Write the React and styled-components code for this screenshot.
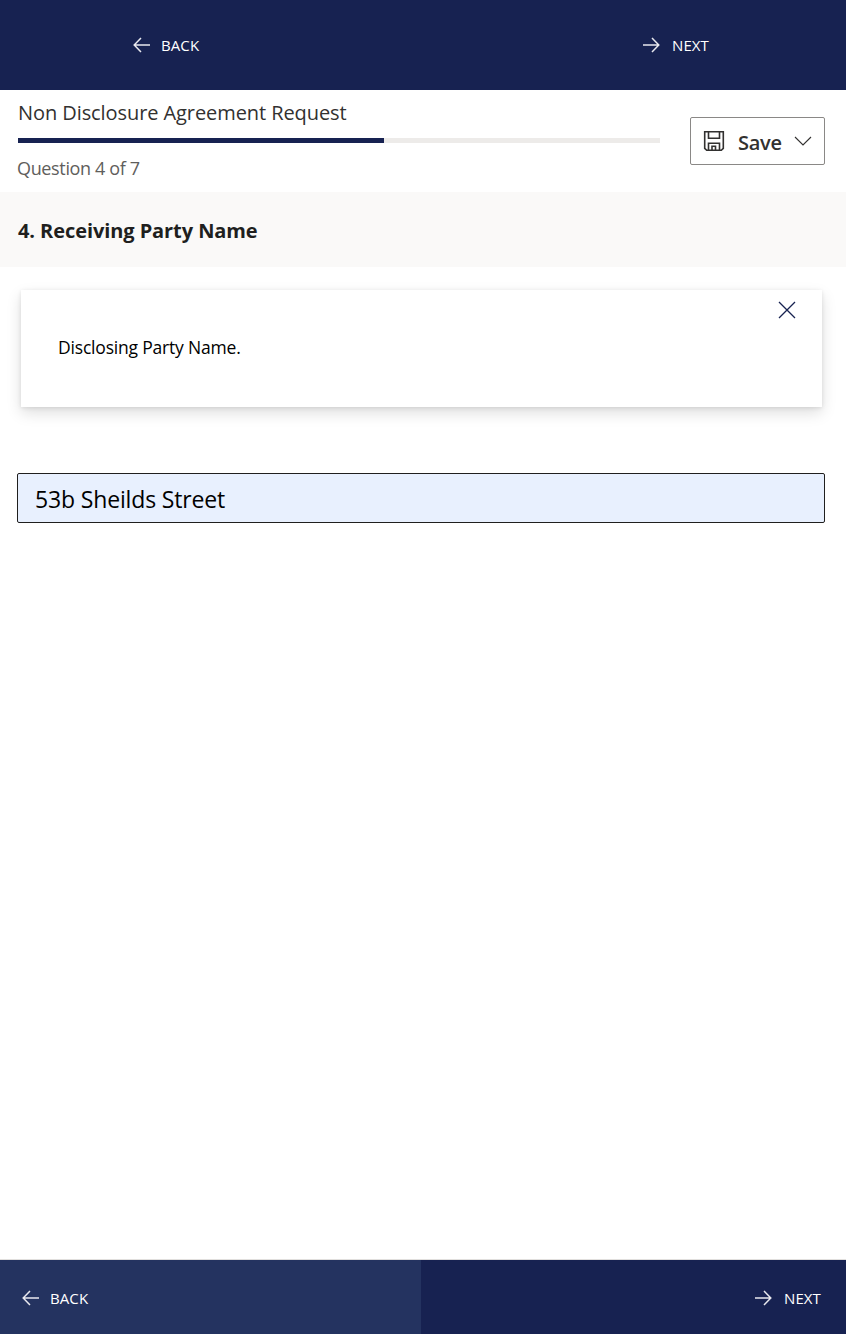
import React from "react";
import styled, { createGlobalStyle } from "styled-components";

const Global = createGlobalStyle`
  html, body { margin: 0; padding: 0; background: #fff; }
  body { font-family: "Open Sans", "Noto Sans", "Liberation Sans", sans-serif; }
`;

const Page = styled.div`
  width: 846px;
  height: 1334px;
  display: flex;
  flex-direction: column;
  overflow: hidden;
`;

const TopNav = styled.nav`
  height: 90px;
  background: #172251;
  display: flex;
  align-items: center;
  padding-left: 133px;
  flex: none;
`;

const TopItem = styled.div`
  flex: none;
  width: 509px;
  display: flex;
  align-items: center;
`;

const NavLabel = styled.span`
  color: #fff;
  font-size: 15px;
  letter-spacing: 0.1px;
  line-height: 20px;
  margin-left: ${(p) => (p.$next ? 12 : 10)}px;
`;

const NavIcon = ({ dir }) => (
  <svg width="18" height="16" viewBox="0 0 18 16" fill="none" stroke="#e8e8ee" strokeWidth="1.5">
    {dir === "back" ? (
      <path d="M17 8H1.2M8 1 1.2 8 8 15" />
    ) : (
      <path d="M1 8h15.8M10 1l6.8 7L10 15" />
    )}
  </svg>
);

const Header = styled.header`
  height: 102px;
  flex: none;
  display: flex;
  padding: 0 21px 0 18px;
`;

const HeaderMain = styled.div`
  width: 642px;
  display: flex;
  flex-direction: column;
`;

const Title = styled.h1`
  margin: 9px 0 0;
  font-size: 20px;
  font-weight: 400;
  letter-spacing: -0.08px;
  line-height: 28px;
  color: #323130;
`;

const Track = styled.div`
  height: 5px;
  margin-top: 11px;
  background: #edebe9;
`;

const Fill = styled.div`
  height: 100%;
  background: #172251;
`;

const Count = styled.div`
  margin-top: 13px;
  margin-left: -1px;
  font-size: 18px;
  letter-spacing: -0.35px;
  line-height: 24px;
  color: #605e5c;
`;

const SaveButton = styled.button`
  width: 135px;
  height: 48px;
  margin: 27px 0 0 30px;
  box-sizing: border-box;
  background: #fff;
  border: 1px solid #8a8886;
  border-radius: 2px;
  padding: 0 12px;
  display: flex;
  align-items: center;
  font-family: inherit;
  font-size: 20px;
  font-weight: 600;
  letter-spacing: -0.3px;
  color: #323130;
`;

const SaveText = styled.span`
  margin-left: 13px;
  margin-right: 12px;
  padding-top: 4px;
  line-height: 28px;
`;

const QuestionBand = styled.section`
  height: 75px;
  box-sizing: border-box;
  flex: none;
  background: #faf9f8;
  display: flex;
  align-items: center;
  padding: 2px 0 0 18px;
`;

const QuestionTitle = styled.h2`
  margin: 0;
  font-size: 20px;
  font-weight: 700;
  letter-spacing: -0.08px;
  color: #201f1e;
`;

const Body = styled.main`
  flex: 1;
  padding: 23px 21px 0 17px;
`;

const InfoCard = styled.div`
  position: relative;
  margin: 0 3px 0 4px;
  height: 117px;
  box-sizing: border-box;
  padding: 45px 37px 0;
  background: #fff;
  box-shadow: 0 6px 14px rgba(0, 0, 0, 0.13), 0 1px 4px rgba(0, 0, 0, 0.1);
  font-size: 17.5px;
  letter-spacing: -0.19px;
  line-height: 24px;
  color: #000;
`;

const CloseBtn = styled.svg`
  position: absolute;
  top: 11px;
  right: 26px;
`;

const Field = styled.div`
  margin-top: 66px;
  width: 808px;
  height: 50px;
  box-sizing: border-box;
  background: #e8f0fe;
  border: 1px solid #201f1e;
  border-radius: 2px;
  padding: 2px 0 0 17px;
  display: flex;
  align-items: center;
  font-size: 23px;
  letter-spacing: -0.15px;
  color: #000;
`;

const BottomNav = styled.nav`
  height: 75px;
  flex: none;
  border-top: 1px solid #e1dfdd;
  box-sizing: border-box;
  display: flex;
`;

const BottomCell = styled.div`
  flex: none;
  width: ${(p) => p.$w}px;
  background: ${(p) => p.$bg};
  display: flex;
  align-items: center;
  justify-content: ${(p) => (p.$end ? "flex-end" : "flex-start")};
  padding: ${(p) => (p.$end ? "2px 25px 0 0" : "2px 0 0 22px")};
  box-sizing: border-box;
`;

export default function App() {
  return (
    <Page>
      <Global />
      <TopNav>
        <TopItem>
          <NavIcon dir="back" />
          <NavLabel>BACK</NavLabel>
        </TopItem>
        <TopItem>
          <NavIcon dir="next" />
          <NavLabel $next>NEXT</NavLabel>
        </TopItem>
      </TopNav>
      <Header>
        <HeaderMain>
          <Title>Non Disclosure Agreement Request</Title>
          <Track>
            <Fill style={{ width: "57%" }} />
          </Track>
          <Count>Question 4 of 7</Count>
        </HeaderMain>
        <SaveButton>
          <svg width="22" height="22" viewBox="0 0 22 22" fill="none" stroke="#323130" strokeWidth="1.6">
            <path d="M1.7 1.7h18.6v16.6l-2 2H3.7l-2-2z" />
            <path d="M5.5 1.7v6.5h11V1.7M5.5 20.3v-7h11v7M9 20.3v-4h3.5v4" />
          </svg>
          <SaveText>Save</SaveText>
          <svg width="18" height="10" viewBox="0 0 18 10" fill="none" stroke="#323130" strokeWidth="1.1">
            <path d="M1 1l8 8 8-8" />
          </svg>
        </SaveButton>
      </Header>
      <QuestionBand>
        <QuestionTitle>4. Receiving Party Name</QuestionTitle>
      </QuestionBand>
      <Body>
        <InfoCard>
          Disclosing Party Name.
          <CloseBtn width="18" height="18" viewBox="0 0 18 18" fill="none" stroke="#172251" strokeWidth="1.3">
            <path d="M1 1l16 16M17 1 1 17" />
          </CloseBtn>
        </InfoCard>
        <Field>53b Sheilds Street</Field>
      </Body>
      <BottomNav>
        <BottomCell $w={421} $bg="#243360">
          <NavIcon dir="back" />
          <NavLabel>BACK</NavLabel>
        </BottomCell>
        <BottomCell $w={425} $bg="#172251" $end>
          <NavIcon dir="next" />
          <NavLabel $next>NEXT</NavLabel>
        </BottomCell>
      </BottomNav>
    </Page>
  );
}
